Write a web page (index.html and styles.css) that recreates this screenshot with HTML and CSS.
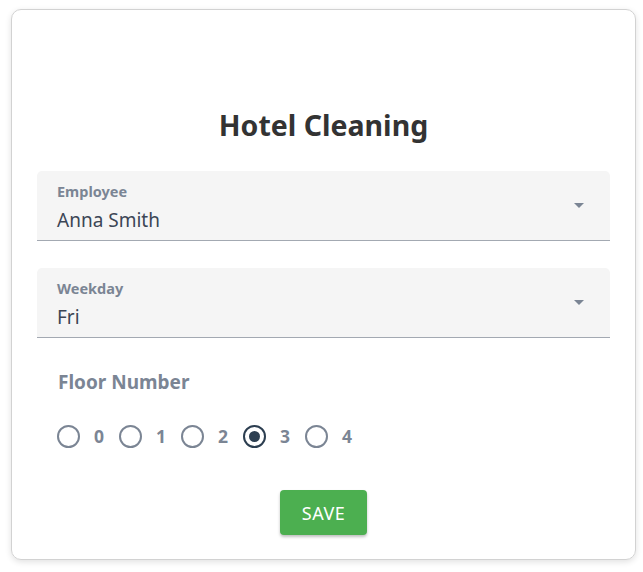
FILE: index.html
```html
<!DOCTYPE html>
<html lang="en">
<head>
<meta charset="utf-8">
<title>Hotel Cleaning</title>
<link rel="stylesheet" href="styles.css">
</head>
<body>
<main class="card">
  <h1 class="title">Hotel Cleaning</h1>
  <div class="field">
    <div class="field-text">
      <span class="field-label">Employee</span>
      <span class="field-value">Anna Smith</span>
    </div>
    <span class="caret"></span>
  </div>
  <div class="field">
    <div class="field-text">
      <span class="field-label">Weekday</span>
      <span class="field-value">Fri</span>
    </div>
    <span class="caret"></span>
  </div>
  <div class="group-label">Floor Number</div>
  <div class="radios">
    <label class="radio"><span class="dot"></span><span class="radio-text">0</span></label>
    <label class="radio"><span class="dot"></span><span class="radio-text">1</span></label>
    <label class="radio"><span class="dot"></span><span class="radio-text">2</span></label>
    <label class="radio checked"><span class="dot"></span><span class="radio-text">3</span></label>
    <label class="radio"><span class="dot"></span><span class="radio-text">4</span></label>
  </div>
  <div class="actions">
    <button class="save">SAVE</button>
  </div>
</main>
</body>
</html>
```
FILE: styles.css
```css
* { box-sizing: border-box; }
html, body { margin: 0; padding: 0; background: #fff; }
body {
  padding: 9px 7px 12px 11px;
  font-family: "Noto Sans", "Open Sans", sans-serif;
}
.card {
  width: 625px;
  height: 551px;
  border: 1px solid #d2d2d2;
  border-radius: 10px;
  box-shadow: 0 2px 6px rgba(0,0,0,0.12);
  padding: 96px 25px 0 25px;
  display: flex;
  flex-direction: column;
}
.title {
  margin: 0;
  height: 38px;
  line-height: 38px;
  text-align: center;
  font-size: 28.5px;
  font-weight: 700;
  color: #333;
}
.field {
  margin-top: 27px;
  height: 70px;
  background: #f5f5f5;
  border-radius: 5px 5px 0 0;
  border-bottom: 1px solid #a3a9b2;
  padding: 10px 26px 0 20px;
  display: flex;
  align-items: flex-start;
  justify-content: space-between;
}
.field-text { display: flex; flex-direction: column; }
.field-label {
  font-size: 14.5px;
  font-weight: 700;
  line-height: 20px;
  color: #7b8594;
}
.field-value {
  margin-top: 6px;
  font-size: 19px;
  line-height: 26px;
  color: #3c4655;
}
.caret {
  margin-top: 22px;
  width: 0;
  height: 0;
  border-left: 5px solid transparent;
  border-right: 5px solid transparent;
  border-top: 5px solid #7b8594;
}
.group-label {
  margin-top: 32px;
  padding-left: 21px;
  font-size: 19px;
  line-height: 24px;
  font-weight: 700;
  color: #7b8594;
}
.radios {
  margin-top: 30px;
  padding-left: 20px;
  display: flex;
  gap: 15px;
  height: 24px;
  align-items: center;
}
.radio {
  display: flex;
  align-items: center;
  gap: 14px;
}
.dot {
  width: 23px;
  height: 23px;
  border: 2px solid #7b8594;
  border-radius: 50%;
  display: flex;
  align-items: center;
  justify-content: center;
}
.radio.checked .dot { border-color: #2c3e50; }
.radio.checked .dot::after {
  content: "";
  width: 11px;
  height: 11px;
  border-radius: 50%;
  background: #2c3e50;
}
.radio-text {
  width: 10px;
  font-size: 17.5px;
  font-weight: 700;
  color: #7b8594;
}
.actions {
  margin-top: 42px;
  display: flex;
  justify-content: center;
}
.save {
  width: 87px;
  height: 45px;
  border: none;
  border-radius: 4px;
  background: #4caf50;
  color: #fff;
  font-family: inherit;
  font-size: 18px;
  letter-spacing: 0.5px;
  box-shadow: 0 2px 3px rgba(0,0,0,0.25);
}
```
